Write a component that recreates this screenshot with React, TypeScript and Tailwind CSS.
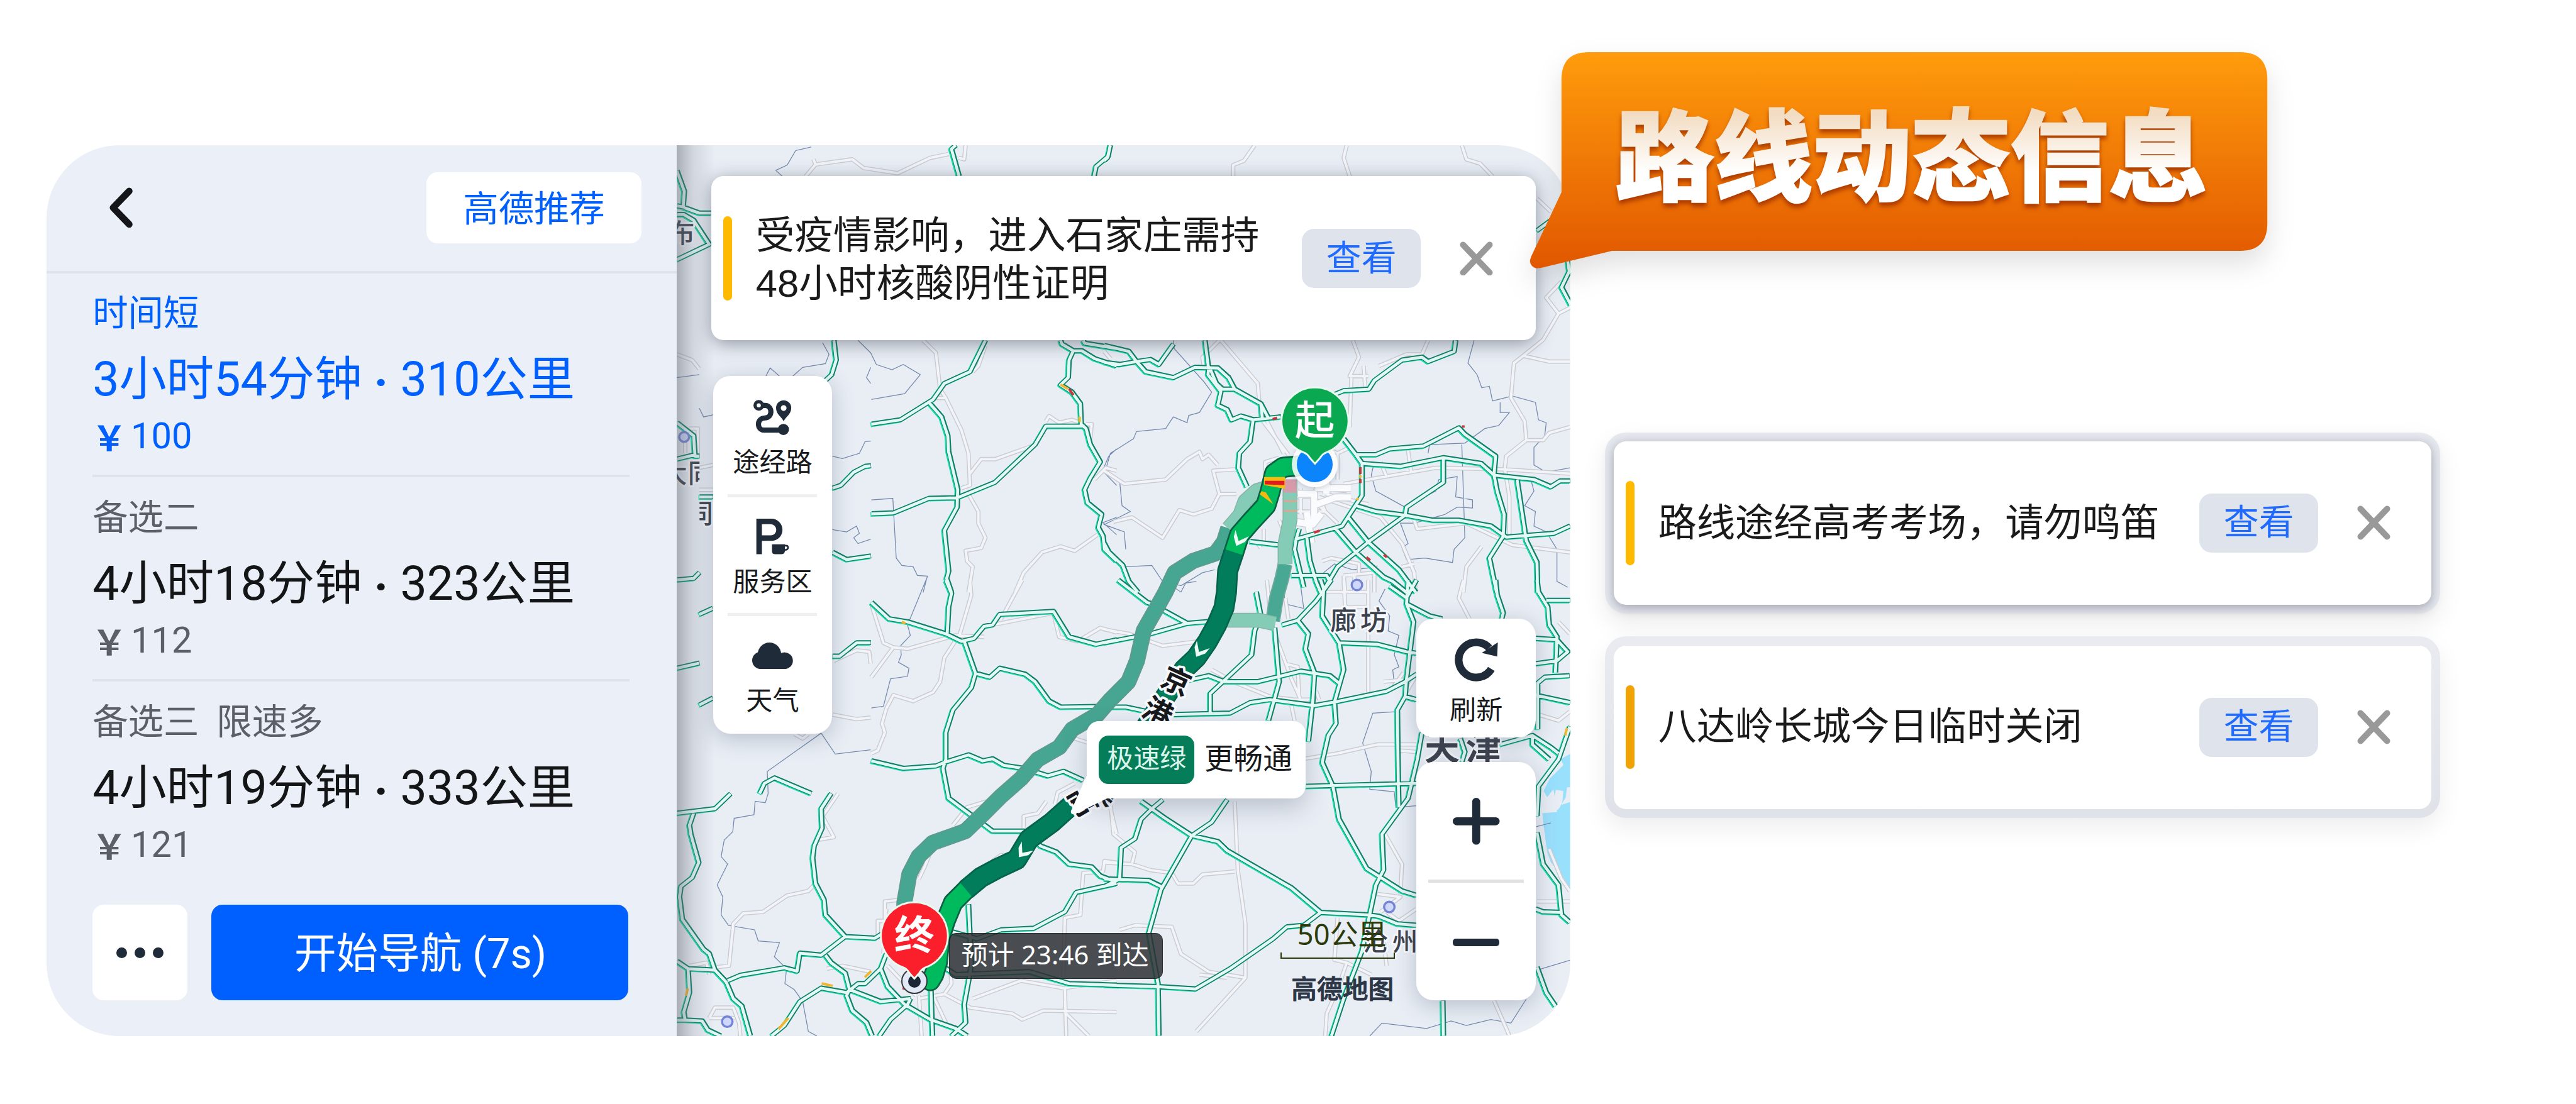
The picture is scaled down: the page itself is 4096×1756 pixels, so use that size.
import React from "react";

/* ---------- map data: four survey sheets, each with its own origin and scale ---------- */

type Sheet = { ox: number; oy: number; sx: number; sy: number; green: string[]; grey: string[]; border: string[] };

const sheets: Sheet[] = [
  {
    ox: 1090, oy: 220, sx: 0.4592, sy: 0.472,
    green: [
      "16,120 42,190 38,245 95,265 137,265", "16,270 40,270 75,290 130,372 16,425", "16,240 45,245",
      "1000,32 985,45 1012,139", "1545,32 1538,70 1495,105 1488,139",
      "570,702 578,770 562,820 540,840", "1105,702 1050,810 960,850 920,905 805,975 702,990",
      "905,915 950,965 972,1030 975,1085 1007,1215 1005,1275 960,1355 975,1495 968,1520 985,1568",
      "702,1298 780,1295 905,1245 1005,1243 1138,1190 1280,1060 1318,997 1455,997",
      "1370,702 1375,715 1415,738 1400,770 1397,830 1370,855 1410,880 1440,920 1443,990 1460,1005 1475,1060 1510,1120 1475,1175 1455,1215 1465,1260 1515,1300 1503,1345 1520,1375 1525,1420 1568,1460",
      "1415,738 1445,738 1490,765 1568,790", "1450,702 1455,712 1568,730",
      "565,1210 595,1200 640,1155 680,1135 700,1133", "565,1430 615,1455 700,1443",
      "16,985 75,1030 80,1100 95,1100", "16,1110 80,1095", "16,1525 75,1520 95,1500", "95,1240 143,1240",
    ],
    grey: [
      "470,139 505,98 635,80 675,110 795,128 910,75 975,62", "505,98 498,80", "1035,32 1030,80 1010,75",
      "885,702 930,745 945,870 965,900 1020,1010 1045,1090 1050,1200 1020,1210",
      "1050,1160 1090,1110 1140,1110 1270,1065", "1318,980 1330,962 1365,985 1410,975 1440,985",
      "1045,1230 1080,1290 1080,1330 1105,1380 1090,1415 1035,1425 1040,1460 1060,1480 1045,1568",
      "1210,1568 1240,1500 1305,1430 1370,1410 1420,1425 1500,1370", "16,750 70,770 95,800",
      "1105,720 1080,790 1060,810", "965,900 930,900", "95,1215 143,1215", "1460,990 1480,990 1475,1040",
      "45,1010 45,1090", "60,1005 90,1005 90,1090", "95,1140 143,1130", "1568,1150 1530,1140 1490,1180",
    ],
    border: [
      "490,38 435,50 405,100 365,118 395,145", "330,825 345,797 378,825", "425,825 460,795 540,782 553,750 530,710",
      "655,702 700,745 720,785 775,803 815,785 875,820 820,885 702,905", "700,795 685,830 700,850", "16,830 95,820",
      "565,1100 600,1108 660,1090 680,1050 700,1048",
      "702,1250 778,1245 790,1450 810,1475 850,1480 865,1510 900,1512 885,1568",
      "565,1352 615,1360 650,1340 660,1365 640,1380 655,1400 700,1385", "1568,1075 1540,1100 1518,1150 1568,1200",
      "1568,1310 1520,1328 1568,1370", "95,935 110,965 143,958",
    ],
  },
  {
    ox: 1790, oy: 220, sx: 0.4974, sy: 0.472,
    green: [
      "20,32 10,75 0,85", "0,720 80,740 105,775 150,768 178,785 225,715",
      "0,778 50,785 105,775 135,810 225,830 295,795 370,797 405,830 425,870 510,920 535,970",
      "328,702 340,800 338,820 380,878 370,925 400,940 415,975 445,962 485,975 575,965",
      "345,800 365,850 385,870 425,870", "510,920 515,970", "485,975 475,1050 440,1090 437,1140 465,1205",
      "1145,702 1140,740 1055,775 1035,760 970,770 880,840 862,870 780,875 750,888",
      "780,1040 820,1095 885,1095 930,1075 1040,1065 1155,1003 1175,1025 1275,1100 1270,1165",
      "820,1095 840,1125 965,1135 1105,1105 1228,1125 1270,1165 1400,1180 1455,1205 1485,1185 1517,1185",
      "840,1125 840,1235 775,1340 625,1385",
      "820,1270 885,1290 980,1303 1070,1320 1155,1320 1260,1340 1310,1378 1465,1365 1517,1340",
      "1105,1105 1105,1190 985,1275 980,1303 860,1395 820,1430 760,1480 710,1568",
      "795,1310 860,1395 960,1490 1015,1568", "755,1350 820,1430 910,1515 940,1530 985,1568",
      "1270,1165 1280,1220 1303,1300 1300,1375 1255,1450 1278,1568", "1345,1180 1375,1390 1410,1465 1412,1568",
      "0,1400 15,1430 60,1475 80,1530 110,1568", "475,1393 570,1405", "625,1385 620,1420 650,1550",
      "660,1380 670,1460 690,1530 705,1568", "610,1510 725,1510 735,1530", "1410,325 1455,290",
      "1510,430 1515,465 1490,520 1520,580", "635,1350 625,1385",
    ],
    grey: [
      "490,32 455,85 420,100 420,139", "790,32 780,75 800,139", "1165,32 1180,80 1225,95 1265,139", "1410,215 1455,260",
      "1517,590 1480,610 1430,700 1365,755 1335,780 1325,900 1370,980 1375,1045 1310,1100 1305,1140",
      "1365,755 1450,775 1517,775", "1480,610 1440,555 1490,500", "1375,1045 1430,1045 1450,1020 1517,1000",
      "380,702 500,850 510,970 600,1095", "375,702 320,760 325,800", "0,740 20,765", "810,702 830,760 800,825 860,825",
      "845,790 850,860", "1055,702 1035,750 985,750 895,790", "805,830 800,1000", "525,970 585,1090",
      "0,1150 65,1195 200,1180 270,1110 310,1085 320,1110 340,1095 370,1130",
      "30,1325 90,1310 190,1380 245,1285 290,1300 350,1280 375,1230 355,1150 430,1145", "375,1230 430,1230",
      "780,1195 1080,1140 1300,1145 1517,1160", "900,1120 920,1170", "990,1080 1000,1155",
      "700,1240 900,1310 970,1400 1010,1500 1015,1568", "690,1260 760,1330", "1305,1140 1320,1240 1320,1370",
      "1010,1320 1020,1350 1180,1330 1280,1380 1330,1405 1517,1430", "570,1105 525,1120 525,1210", "660,1320 665,1380",
      "710,1460 740,1450 830,1470 830,1500", "1230,1410 1180,1480 1170,1568", "780,1510 880,1500 880,1568",
      "580,1240 680,1240 690,1210 790,1220", "620,1290 720,1290 700,1240", "570,1320 580,1345 640,1330", "760,1180 760,1090 700,1060",
      "640,1210 640,1300", "500,1400 510,1415", "970,1480 1010,1470", "780,1510 785,1568", "815,1510 815,1568",
      "520,1390 520,1350", "760,1090 800,1070 780,1050", "720,1230 860,1265",
    ],
    border: [
      "225,702 228,730 325,845 350,880 310,950 275,960 270,985 225,965 200,1005 105,1015 95,1040 20,1090 5,1145 50,1185 58,1270 85,1290 0,1335 65,1360 70,1420",
      "1205,702 1185,780 1215,820 1230,865 1255,860 1265,910 1330,893 1405,915 1415,975 1440,985 1435,1030 1400,1070 1400,1130 1440,1155 1517,1140",
      "1290,915 1290,950 1320,950 1285,995 1240,1005 1175,1055 1060,1060 1055,1090",
      "880,1120 870,1165 885,1220 980,1275 1080,1220 1090,1180 1150,1170 1145,1240 1200,1250 1200,1278 1150,1275 1110,1300 1010,1330 965,1330 990,1400 970,1415 985,1455 1045,1450 1135,1465 1140,1420 1175,1380 1165,1060",
      "1390,1180 1400,1220 1370,1270 1405,1290 1400,1340 1440,1360 1475,1420 1475,1530 1510,1550",
      "60,1480 155,1475 190,1530 250,1545 320,1500 360,1490", "715,1500 750,1470 810,1490 890,1480",
    ],
  },
  {
    ox: 1090, oy: 940, sx: 0.4592, sy: 0.4847,
    green: [
      "702,75 765,130 830,140 965,180 1020,205 1065,195 1100,155 1130,150 1155,115 1345,105 1400,190 1495,215 1568,200",
      "965,0 985,45 975,90 970,180",
      "1030,205 1070,312 1055,360 990,435 965,510 965,600 955,630 975,730 1130,840 1240,840 1300,890 1355,910 1400,950 1480,960 1510,990 1568,1010",
      "1070,312 1120,325 1155,295 1245,315 1280,340 1330,405 1370,425 1505,423",
      "702,605 815,630 930,622 960,610 1045,585 1095,605 1130,598 1170,620 1240,630 1325,655 1380,640 1450,670",
      "95,115 142,95", "95,418 142,395", "16,295 95,278", "565,255 590,255 650,210 700,210", "16,780 150,765 205,715",
      "75,780 60,820 65,850 93,945 70,995 30,1025 25,1060 35,1135 110,1235 130,1250 150,1305 190,1345 215,1400 245,1425 275,1525",
      "308,714 325,680 360,662 490,714",
      "560,714 525,765 528,830 500,890 495,930 505,1015 535,1070 540,1120 610,1193 715,1198 745,1180", "16,1275 55,1300 150,1305",
      "195,1340 240,1322 395,1297 440,1308 450,1248 525,1255 610,1193", "55,1300 60,1380 40,1445 45,1472 16,1472",
      "45,1472 105,1475 125,1505 170,1525",
      "350,1525 395,1490 450,1410 525,1365 615,1380 655,1350 680,1350 735,1300 755,1250",
      "540,1255 560,1280 610,1315 625,1370 615,1390 635,1440 685,1480 705,1525", "625,1370 735,1410 840,1400",
      "735,1300 760,1360 820,1420 910,1470 1000,1500 1040,1525", "730,1525 770,1470 830,1420 840,1400", "912,1360 918,1525",
      "1045,1085 1055,1290 1030,1420 1035,1480 985,1525",
      "1568,1015 1425,1045 1385,1110 1275,1165 1160,1170 1075,1200 980,1175", "950,1290 1000,1320 1260,1310 1400,1350 1568,1355",
    ],
    grey: [
      "702,80 745,210 780,225 830,230 1000,185 1100,190", "702,325 780,225",
      "1050,0 1055,50 1015,180 960,260 945,340 920,375 850,405 780,385 755,430 740,480 750,510 725,570 702,580",
      "1235,0 1160,130", "1130,150 1345,110 1365,190 1430,205 1510,160 1568,175", "585,714 530,790 570,860 505,870",
      "505,1015 480,1040 405,1055 320,1110 250,1115 215,1150 200,1290 110,1300", "565,450 650,465 700,460",
      "570,270 650,235 695,240 700,280", "755,1100 745,1250", "750,1150 750,1075 800,1070", "725,1200 725,1140 755,1140",
      "870,1400 960,1385 1050,1430 1200,1450 1235,1470 1310,1440 1568,1445", "870,1390 880,1525", "920,1390 975,1500",
      "1385,1360 1390,1525", "1380,1330 1385,1130 1440,1120 1450,980 1520,975 1525,940 1568,945", "1240,830 1240,790 1290,780 1320,740",
      "990,820 1040,760 1110,740", "870,1000 890,960 915,900", "130,1465 150,1430 215,1430 235,1480 240,1525",
      "60,1290 120,1280 130,1320", "545,1300 600,1290 700,1310", "1350,750 1360,710 1420,680", "1390,1450 1470,1525",
      "980,1290 985,1350 960,1385", "760,1290 860,1390", "130,1465 220,1465", "1130,940 1160,920 1200,920", "1060,1400 1230,1340 1380,1365 1568,1340",
      "1540,740 1568,850", "430,515 460,530 480,515", "1420,530 1470,545",
    ],
    border: [
      "895,0 830,150 840,185 805,220 808,250 798,275 835,295 830,322 770,330 745,422 702,428", "525,512 575,582 700,568",
      "525,512 335,640 338,714 328,745 292,740 288,785 218,797 213,842 183,870 172,925 195,950 158,1020 178,1060 172,1120 198,1155 290,1170 303,1207 378,1213 360,1260 403,1300 397,1350 430,1370 460,1410 480,1510 510,1525",
    ],
  },
  {
    ox: 1790, oy: 940, sx: 0.4974, sy: 0.4847,
    green: [
      "45,0 140,75 155,80 270,145 385,135", "0,210 150,180 270,145", "495,40 510,120 490,170 480,250 345,380 345,450",
      "275,335 340,320 390,340 500,340 640,305 735,320 765,345",
      "0,425 70,425 140,440 230,450 410,445 475,410 540,400 685,420 750,408 920,372 980,340 1017,315",
      "555,160 570,340 535,470", "580,150 630,135 690,70 740,0", "630,135 665,180 655,230 685,310 680,400 665,540",
      "705,0 715,30 710,120 765,210 780,300 750,408 755,480 730,520 710,610 745,690 765,800 855,965 970,1040 1017,1055",
      "765,210 890,215 985,240 1017,245", "990,0 985,80 1008,140 985,330 980,390 955,435 958,680 960,760",
      "985,80 1060,120 1100,130", "930,20 985,60 1017,0", "1275,0 1280,50 1300,110 1295,130",
      "1410,0 1415,40 1445,90 1450,150 1475,190 1470,310", "1440,68 1517,68", "1405,195 1475,200 1510,240 1475,270 1405,280",
      "1515,320 1435,325 1412,345 1412,500", "657,690 1017,680", "1035,510 1020,600 990,730 905,850 910,970 885,1020 840,1240 780,1400 740,1525",
      "120,740 195,795 285,855 370,875 400,905 610,1030 705,1112 860,1120 895,1125 955,1150 1017,1155",
      "400,735 350,810 285,855 185,1035 145,1180 175,1350 178,1525", "190,735 155,765 120,800 100,865 55,895 50,1000 0,1025",
      "0,1000 145,1005 185,1025", "0,1355 175,1360 297,1368 410,1300 550,1200 595,1160 650,1155 705,1112",
      "1290,550 1395,520 1455,560 1480,580", "1517,490 1480,600 1415,690 1410,790", "1410,845 1430,950 1480,1020 1490,1120 1517,1145",
      "1405,1100 1430,1110 1490,1112", "1410,1295 1440,1380 1470,1425", "1103,1407 1105,1525", "1160,530 1175,575 1165,608",
      "980,390 1017,400", "1405,385 1517,410", "1395,520 1395,550 1450,600",
    ],
    grey: [
      "530,0 545,150 610,330 640,400", "0,165 80,180 190,220 350,200", "350,300 420,340 540,390 620,400 690,400",
      "425,740 435,970 460,1150 460,1330 300,1510", "90,950 100,910 30,850 20,740",
      "0,945 90,950 150,970 220,980 240,1015 290,1015 320,985 425,975", "640,600 760,580 890,550 1017,550",
      "915,850 970,950 965,1050", "890,1050 965,1060 900,1110", "760,1130 750,1270 790,1280 850,1310 870,1320",
      "790,1280 760,1370 725,1450 720,1525", "50,1170 100,1155 220,1160 250,1250 340,1310 460,1330", "1170,0 1155,60 1190,130",
      "720,40 860,40", "780,0 785,90 860,90", "860,0 860,380", "910,340 1010,330 970,400", "1410,1075 1517,1075",
      "1450,900 1490,1000 1517,1040", "1270,1407 1310,1500 1320,1525", "1415,450 1480,470 1517,440", "920,1110 960,1140 1017,1100",
      "400,1330 310,1320", "590,280 630,290 635,390", "690,370 700,400", "910,1200 920,1290", "1480,140 1517,180",
      "600,130 590,60", "610,420 620,470", "940,360 975,310", "960,570 1017,575",
    ],
    border: [
      "915,30 895,70 930,120 925,170 960,185 945,250 960,290 940,300 945,350 970,355",
      "955,440 875,445 842,545 870,640 865,700 945,708 950,760 1017,755",
      "865,1525 905,1482 1050,1500 1130,1475 1180,1490 1260,1470 1325,1482 1375,1402", "1408,825 1455,812",
      "1410,1305 1517,1272", "190,0 250,40 265,10 300,5", "580,0 590,80 650,95 640,20",
    ],
  },
];

function toPath(s: Sheet, lines: string[]) {
  return lines
    .map((line) =>
      line
        .split(" ")
        .map((p, i) => {
          const [x, y] = p.split(",").map(Number);
          return `${i ? "L" : "M"}${(s.ox + x * s.sx).toFixed(1)} ${(s.oy + y * s.sy).toFixed(1)}`;
        })
        .join("")
    )
    .join("");
}

const greenRoads = sheets.map((s) => toPath(s, s.green)).join("");
const greyRoads = sheets.map((s) => toPath(s, s.grey)).join("");
const borders = sheets.map((s) => toPath(s, s.border)).join("");

const cityBlocks =
  "M2104 800H2130V846M2132 791H2190M2150 780V800M2132 818L2165 806H2190M2102 846L2128 850L2142 832M2118 830L2126 880";

const routeStart = "M2104 755L2080 757L2066 767L2059 796L2052 819L2028 845L2009 867L2000 895";
const routeMiddle =
  "M2000 895L1990 925L1988 960L1984 985L1972 1013L1957 1040L1939 1066L1919 1085L1889 1129L1850 1190L1800 1270L1779 1285L1733 1308L1705 1333L1668 1360L1648 1393L1618 1407L1590 1422L1566 1442";
const routeEnd = "M1566 1442L1545 1463L1533 1492L1524 1520L1520 1560L1514 1580L1508 1590";
const altLeftLight = "M2060 788L2037 795L2018 812L2010 834L1991 856";
const altLeft =
  "M1991 856L1984 878L1970 897L1934 909L1904 928L1889 960L1875 985L1854 1022L1843 1071L1829 1105L1800 1134L1779 1158L1738 1182L1717 1211L1682 1231L1655 1262L1622 1291L1595 1318L1565 1347L1512 1366L1489 1388L1474 1417L1466 1463L1466 1490";
const altRightLight = "M2091 777L2091 843L2083 881L2083 914";
const altRight = "M2083 914L2078 937L2069 969L2063 1006";
const altJoin = "M2067 1011L2040 1005L1984 1005";

const labelFont = "'Noto Sans','Noto Sans CJK SC',sans-serif";

function MapLabel({ x, y, size, children, bold, spacing = 0 }: any) {
  return (
    <text
      x={x}
      y={y}
      fontSize={size}
      fontFamily={labelFont}
      fontWeight={bold ? 700 : 500}
      fill="#3c424d"
      stroke="#f6f8fb"
      strokeWidth={6}
      strokeLinejoin="round"
      paintOrder="stroke"
      letterSpacing={spacing}
    >
      {children}
    </text>
  );
}

/* One character of a highway name, centred on the given point and turned with the road. */
function RoadGlyph({ x, y, rotate, children }: any) {
  return (
    <text
      transform={`translate(${x} ${y}) rotate(${rotate})`}
      y={17}
      textAnchor="middle"
      fontSize={47}
      fontFamily={labelFont}
      fontWeight={700}
      fill="#16181b"
      stroke="#f6f8fb"
      strokeWidth={8}
      strokeLinejoin="round"
      paintOrder="stroke"
    >
      {children}
    </text>
  );
}

function Arrow({ x, y, r }: { x: number; y: number; r: number }) {
  return (
    <path
      d="M-12 -11L0 3L12 -11L10 0L0 12L-10 0Z"
      transform={`translate(${x} ${y}) rotate(${r})`}
      fill="#effbf5"
    />
  );
}

function MapCanvas() {
  return (
    <svg className="absolute inset-0 size-full" viewBox="1097 235 1448 1445" preserveAspectRatio="none">
      <defs>
        <linearGradient id="edge" x1="0" x2="1" y1="0" y2="0">
          <stop offset="0" stopColor="#5b606b" stopOpacity=".46" />
          <stop offset=".45" stopColor="#6b7080" stopOpacity=".18" />
          <stop offset="1" stopColor="#6b7080" stopOpacity="0" />
        </linearGradient>
        <clipPath id="tongA"><rect x="1097" y="700" width="37" height="100" /></clipPath>
        <clipPath id="tongB"><rect x="1134" y="790" width="40" height="80" /></clipPath>
      </defs>
      <rect x="1097" y="235" width="1448" height="1445" fill="#e9eef5" />
      <path d="M2545 1222L2530 1230L2534 1240L2512 1262L2502 1282L2508 1292L2518 1279L2524 1316L2500 1318L2503 1345L2508 1382L2514 1398L2530 1416L2545 1440Z" fill="#99e0fd" />
      <path d="M2522 1280L2534 1282L2532 1304L2545 1300L2545 1276L2540 1276L2538 1292L2526 1312L2514 1314Z" fill="#e9eef5" />
      <path d={borders} fill="none" stroke="#7489ad" strokeWidth="1.3" />
      <g fill="none" strokeLinejoin="round">
        <path d={greyRoads} stroke="#c9ccd3" strokeWidth="7" />
        <path d={greyRoads} stroke="#f2f4f8" strokeWidth="4" />
      </g>
      <g fill="none" strokeLinejoin="round">
        <path d={cityBlocks} stroke="#cfd3da" strokeWidth="13" />
        <path d={cityBlocks} stroke="#fafbfd" strokeWidth="10" />
      </g>
      <g fill="none" strokeLinejoin="round">
        <path d={greenRoads} stroke="#15dba8" strokeWidth="8" transform="translate(-1.2 .8)" />
        <path d={greenRoads} stroke="#0e7f68" strokeWidth="8" transform="translate(.6 -.4)" />
        <path d={greenRoads} stroke="#e3f9f4" strokeWidth="4.8" />
      </g>
      <g fill="none" strokeWidth="4">
        <path d="M1733 630L1740 640M2063 679L2070 677M2205 757V768M2205 776V783M2130 863L2139 860M2215 903L2221 908M2243 899L2248 903M1463 1602H1470M2370 691H2374" stroke="#c9333b" />
        <path d="M1719 623L1731 630M1750 675V684M2205 770V774M2199 810L2202 807M1462 1008L1468 1010M1115 1602L1112 1614M1332 1594L1350 1598M1262 1668L1278 1650M1402 1584L1412 1574M2540 1180L2537 1192" stroke="#f2b530" />
      </g>

      <g stroke="#7484d8" strokeWidth="3.5" fill="#cfd8fb">
        <circle cx="1109" cy="708" r="8" />
        <circle cx="1179" cy="1656" r="8.5" />
        <circle cx="2199.5" cy="948" r="8.5" />
        <circle cx="2252" cy="1470" r="8.5" />
      </g>
      <MapLabel x={1083} y={393} size={43}>布</MapLabel>
      <g clipPath="url(#tongA)"><MapLabel x={1071} y={782} size={43} spacing={1}>大同</MapLabel></g>
      <g clipPath="url(#tongB)"><MapLabel x={1113} y={848} size={43}>同</MapLabel></g>
      <MapLabel x={2156} y={1021} size={43} spacing={6}>廊坊</MapLabel>
      <MapLabel x={2309} y={1232} size={57} spacing={10} bold>天津</MapLabel>
      <MapLabel x={2209} y={1541} size={41} spacing={7}>沧州</MapLabel>

      <g fill="none" strokeLinejoin="round">
        <path d={altLeft} stroke="#5f9a8d" strokeWidth="26" />
        <path d={altLeft} stroke="#46a692" strokeWidth="22" />
        <path d={altRight} stroke="#6fa99c" strokeWidth="24" />
        <path d={altRight} stroke="#48a893" strokeWidth="20" />
        <path d={altLeftLight + altRightLight + altJoin} stroke="#86b5a6" strokeWidth="24" />
        <path d={altLeftLight + altRightLight + altJoin} stroke="#84ccb5" strokeWidth="21" />
        <path d="M2091 777V798" stroke="#d69aaa" strokeWidth="21" />
        <path d="M2081 812H2102M2081 828H2102" stroke="#dda58f" strokeWidth="3" />
        <g strokeLinecap="round">
          <path d={routeStart} stroke="#0a6043" strokeWidth="34" />
          <path d={routeEnd} stroke="#0a6043" strokeWidth="33" />
        </g>
        <path d={routeMiddle} stroke="#046348" strokeWidth="34" />
        <path d={routeStart} stroke="#00ba5e" strokeWidth="28.5" />
        <path d={routeEnd} stroke="#00ba5e" strokeWidth="27.5" strokeLinecap="round" />
        <path d={routeMiddle} stroke="#027d5c" strokeWidth="28.5" />
      </g>
      <path d="M2049 773H2083V792L2049 786Z" fill="#f8bb0c" />
      <path d="M2050 779H2082V786L2050 785Z" fill="#e01b25" />
      <path d="M2045 796L2052 798L2064 817L2042 801Z" fill="#f4b90f" />
      <Arrow x={2009} y={874} r={25} />
      <Arrow x={1945} y={1054} r={30} />
      <Arrow x={1659} y={1380} r={38} />

      <RoadGlyph x={1907} y={1104} rotate={24}>京</RoadGlyph>
      <RoadGlyph x={1877} y={1154} rotate={27}>港</RoadGlyph>
      <RoadGlyph x={1790} y={1280} rotate={38}>澳</RoadGlyph>
      <RoadGlyph x={1756} y={1298} rotate={60}>高</RoadGlyph>

      <rect x="1097" y="235" width="62" height="1445" fill="url(#edge)" />
    </svg>
  );
}

/* ---------- pieces of the interface ---------- */

function CloseIcon() {
  return (
    <svg className="h-[56px] w-[54px] shrink-0" viewBox="0 0 54 56">
      <path d="M5.5 5.5L48.5 50.5M48.5 5.5L5.5 50.5" stroke="#999" strokeWidth="10" strokeLinecap="round" />
    </svg>
  );
}

function Notice({ lines, bar, className }: { lines: string[]; bar: string; className: string }) {
  return (
    <div className={`flex items-center rounded-[20px] bg-white pl-[19px] ${className}`}>
      <div className={`h-[136px] w-[15px] shrink-0 rounded-[7px] ${bar}`} />
      <div className="ml-[38px] grow font-[family-name:'Liberation_Sans','Noto_Sans_CJK_SC',sans-serif] leading-[78px] whitespace-nowrap text-[#1a1a1a]">
        {lines.map((l) => (
          <div key={l}>{l}</div>
        ))}
      </div>
      <button className="mr-[63px] flex h-[96px] w-[193px] shrink-0 items-center justify-center rounded-[20px] bg-[#dfe3ec] pt-[1px] text-[57px] leading-none text-[#1f6bff]">
        查看
      </button>
      <CloseIcon />
    </div>
  );
}

function RouteRow({ tag, time, distance, price, active, last }: any) {
  return (
    <div
      className={`flex h-[331px] flex-col border-b-[5px] pt-[26px] whitespace-nowrap ${last ? "border-transparent" : "border-[#dfe3ed]"} ${active ? "text-[#0060ff]" : "text-[#5c5f66]"}`}
    >
      <div className="text-[57.500px] leading-[80px] whitespace-pre">{tag}</div>
      <div className={`mt-[16px] text-[76.800px] leading-[100px] ${active ? "" : "text-[#141517]"}`}>
        {time}
        <span className="relative top-[5px] mx-[19.500px] font-bold">·</span>
        {distance}
      </div>
      <div className="mt-[2px] flex items-center text-[59px] leading-[80px]">
        <span className="mr-[7px] ml-[-1px] font-[family-name:'Noto_Sans_CJK_SC',sans-serif] text-[56px] font-bold">￥</span>
        {price}
      </div>
    </div>
  );
}

function Tool({ label, low, children }: any) {
  return (
    <button className="flex h-[193px] w-full flex-col items-center pt-[35px] text-[43px] leading-[50px] text-[#17191c]">
      <span className="flex h-[64px] items-center justify-center">{children}</span>
      <span className={low ? "mt-[24px]" : "mt-[16px]"}>{label}</span>
    </button>
  );
}

function Panel() {
  return (
    <aside className="flex w-[1022px] shrink-0 flex-col bg-[#ebeff8]">
      <header className="flex h-[208px] items-center justify-between border-b-[5px] border-[#dfe3ed] pr-[57px] pl-[100px]">
        <svg className="h-[66px] w-[42px]" viewBox="0 0 42 66">
          <path d="M34 6L8 33L34 60" fill="none" stroke="#141619" strokeWidth="11" strokeLinecap="round" strokeLinejoin="round" />
        </svg>
        <button className="flex h-[116px] w-[349px] items-center justify-center rounded-[18px] bg-white pt-[5px] text-[57.500px] leading-none text-[#0060ff]">
          高德推荐
        </button>
      </header>
      <div className="pr-[77px] pl-[75px]">
        <RouteRow active tag="时间短" time="3小时54分钟" distance="310公里" price="100" />
        <RouteRow tag="备选二" time="4小时18分钟" distance="323公里" price="112" />
        <RouteRow last tag="备选三  限速多" time="4小时19分钟" distance="333公里" price="121" />
      </div>
      <div className="mt-[31px] flex gap-[39px] pl-[75px]">
        <button className="flex h-[155px] w-[154px] items-center justify-center gap-[12px] rounded-[18px] bg-white">
          <i className="size-[17.500px] rounded-full bg-[#1f2b38]" />
          <i className="size-[17.500px] rounded-full bg-[#1f2b38]" />
          <i className="size-[17.500px] rounded-full bg-[#1f2b38]" />
        </button>
        <button className="flex h-[155px] w-[675px] items-center justify-center rounded-[18px] bg-[#0060ff] pt-[4px] pl-[2px] text-[68px] leading-none whitespace-pre text-white">
          开始导航 (7s)
        </button>
      </div>
    </aside>
  );
}

function Pin({ className, color, children }: any) {
  return (
    <div className={`absolute h-[130px] w-[116px] ${className}`}>
      <svg className="absolute inset-0 size-full" viewBox="0 0 116 130">
        <path d="M58 3A54.500 54.500 0 0 1 77 108.500Q70 111 66 118L58 127L50 118Q46 111 39 108.500A54.500 54.500 0 0 1 58 3Z" fill={color} stroke="#eafaf0" strokeWidth="3" />
      </svg>
      <div className="relative pt-[23px] text-center text-[65px] leading-[70px] font-medium text-white">{children}</div>
    </div>
  );
}

const card = "absolute bg-white rounded-[28px] shadow-[0_8px_36px_rgba(70,80,105,0.3)]";

function MapView() {
  return (
    <section className="relative w-[1448px] overflow-hidden">
      <MapCanvas />

      <Notice
        lines={["受疫情影响，进入石家庄需持", "48小时核酸阴性证明"]}
        bar="bg-[#ffba00]"
        className="absolute top-[50.500px] left-[56px] h-[266px] w-[1336px] pt-[1px] pr-[69px] text-[62.800px] shadow-[0_6px_28px_rgba(60,65,85,0.5)] [&>div:nth-child(2)]:pt-[5px]"
      />

      <div className={`${card} top-[375px] left-[58.500px] h-[580px] w-[193.500px]`}>
        <Tool label="途经路">
          <svg className="h-[57px] w-[62px]" viewBox="64 54 186 171" fill="#1f2b38">
            <path d="M100 81H120C157 81 160 140 120 142C76 144 82 201 114 201H205" fill="none" stroke="#1f2b38" strokeWidth="25" />
            <circle cx="90" cy="81" r="18" fill="#fff" stroke="#1f2b38" strokeWidth="16" />
            <circle cx="210" cy="198" r="27" />
            <path fillRule="evenodd" d="M211 158C202 138 174 124 174 93A37 37 0 0 1 248 93C248 124 220 138 211 158ZM211 80A14 14 0 1 0 211 108A14 14 0 1 0 211 80Z" />
          </svg>
        </Tool>
        <div className="absolute top-[191px] left-[24px] h-[5px] w-[145px] bg-[#efefef]" />
        <Tool label="服务区">
          <svg className="h-[58px] w-[54px]" viewBox="79 50 160 174" fill="#1f2b38">
            <path fillRule="evenodd" d="M80 50H153A54 54 0 0 1 153 158H107V223H80ZM107 77V131H150A27 27 0 0 0 150 77Z" />
            <path d="M156 175H219V205Q219 223 200 223H172Q156 223 156 208Z" />
            <path d="M217 181H224Q234 181 234 190Q234 202 217 202" fill="none" stroke="#1f2b38" strokeWidth="8" />
          </svg>
        </Tool>
        <div className="absolute top-[384px] left-[24px] h-[5px] w-[145px] bg-[#efefef]" />
        <Tool label="天气">
          <svg className="h-[44px] w-[66px]" viewBox="0 0 66 44" fill="#1f2b38">
            <circle cx="28" cy="20" r="19" />
            <circle cx="14" cy="30" r="14" />
            <circle cx="52.500" cy="30.500" r="13.500" />
            <path d="M14 20H45Q47 17 53 17V44H14Z" />
          </svg>
        </Tool>
      </div>

      <div className={`${card} top-[768px] left-[1199px] h-[193px] w-[193px]`}>
        <Tool label="刷新" low>
          <svg className="h-[76px] w-[76px]" viewBox="-38 -38 76 76" fill="none">
            <path d="M21 -19A28.500 28.500 0 1 0 24.500 15" stroke="#1f2b38" strokeWidth="12.500" />
            <path d="M35 -28L34 -5L9 -11Z" fill="#1f2b38" />
          </svg>
        </Tool>
      </div>

      <div className={`${card} top-[1000px] left-[1199px] flex h-[387px] w-[193px] flex-col items-center`}>
        <div className="flex h-[191px] items-center pt-[2px]">
          <svg className="size-[78px]" viewBox="0 0 78 78">
            <path d="M39 7.500V70.500M7.500 39H70.500" stroke="#1f2b38" strokeWidth="13" strokeLinecap="round" />
          </svg>
        </div>
        <div className="h-[5px] w-[155px] bg-[#e1e1e3]" />
        <div className="flex grow items-center pt-[3px]">
          <div className="h-[13px] w-[76px] rounded-[5px] bg-[#1f2b38]" />
        </div>
      </div>

      <div className="absolute top-[934px] left-[664px] flex h-[126px] w-[355px] items-center rounded-[20px] bg-white pl-[20px] shadow-[0_14px_40px_rgba(60,70,95,0.28)]">
        <svg className="absolute top-[80px] -left-[27px] h-[74px] w-[70px]" viewBox="0 0 70 74">
          <path d="M28 8L2 66Q1 73 9 71L62 45V8Z" fill="#fff" />
        </svg>
        <span className="relative flex h-[79px] w-[155px] items-center justify-center rounded-[16px] bg-[#047d58] pb-[3px] text-[43px] leading-none text-[#dcf5ec]">
          极速绿
        </span>
        <span className="relative ml-[16px] pb-[3px] text-[47.500px] leading-none text-[#17191c]">更畅通</span>
      </div>

      <div className="absolute top-[1278px] left-[441px] flex h-[74px] w-[347px] items-center justify-center rounded-[12px] border-2 border-black/40 bg-[#2d2f33]/85 pr-[3px] pb-[5px] font-[family-name:'Noto_Sans','Noto_Sans_CJK_SC',sans-serif] text-[43px] leading-none whitespace-nowrap text-white">
        预计 23:46 到达
      </div>

      <div className="absolute top-[481px] left-[997px] size-[74px] rounded-full bg-white/85 p-[8px] shadow-[0_2px_10px_rgba(60,70,95,0.25)]">
        <div className="size-full rounded-full bg-[#0c84fb]" />
      </div>
      <Pin className="top-[390px] left-[976px]" color="#0aa850">起</Pin>

      <div className="absolute top-[1335px] left-[364px] flex size-[42px] items-center justify-center rounded-full border-[3px] border-[#34373c] bg-[#e2e8f5]">
        <div className="size-[20px] rounded-full bg-[#1b2535]" />
      </div>
      <Pin className="top-[1225px] left-[327px]" color="#fb1f2b">
        <span className="font-bold">终</span>
      </Pin>

      <div className="absolute top-[1251px] left-[978px] flex w-[186px] flex-col items-center">
        <div className="ml-[14px] font-[family-name:'Noto_Sans','Noto_Sans_CJK_SC',sans-serif] text-[46px] leading-[58px] whitespace-nowrap text-[#2c3a0a]">50公里</div>
        <div className="h-[10px] w-full border-[2.500px] border-t-0 border-[#2c3a0a]" />
        <div className="mt-[23px] ml-[16px] text-[41.500px] leading-[56px] font-medium text-[#2c3646] [-webkit-text-stroke:1px_#2c3646]">高德地图</div>
      </div>
    </section>
  );
}

function Banner() {
  return (
    <div className="relative h-[322px] w-[1144px]">
      <svg className="absolute top-0 -left-[60px] h-[360px] w-[1210px] overflow-visible [filter:drop-shadow(0_22px_22px_rgba(0,0,0,0.12))]" viewBox="-60 0 1210 360">
        <defs>
          <linearGradient id="orange" x1="0" x2="0" y1="0" y2="1">
            <stop offset="0" stopColor="#ff9c0c" />
            <stop offset="1" stopColor="#e15700" />
          </linearGradient>
        </defs>
        <path
          d="M44 0H1100Q1144 0 1144 44V278Q1144 322 1100 322H82L-34 350Q-44 352 -49 345Q-53 340 -49 331L0 227V44Q0 0 44 0Z"
          fill="url(#orange)"
        />
      </svg>
      <h1 className="absolute top-[38px] left-[84px] bg-linear-to-b from-[#f2dcc2] from-25% to-white to-65% bg-clip-text pl-[3px] font-[family-name:'Noto_Sans_CJK_SC',sans-serif] text-[160px] leading-[240px] font-black whitespace-nowrap text-transparent [-webkit-text-stroke:2.5px_transparent] [filter:drop-shadow(0_7px_4px_rgba(150,40,0,0.75))]">
        路线动态信息
      </h1>
    </div>
  );
}

export default function App() {
  return (
    <div className="h-screen w-screen overflow-hidden bg-white">
      <main className="flex h-[1790px] w-[4175px] items-start overflow-hidden bg-white pl-[75px] font-[family-name:Roboto,'Noto_Sans_CJK_SC',sans-serif] [zoom:0.98105]">
        <div className="mt-[235px] flex h-[1445px] w-[2470px] shrink-0 overflow-hidden rounded-[118px]">
          <Panel />
          <MapView />
        </div>
        <div className="relative z-10 -ml-[14px] flex flex-col pt-[85px]">
          <Banner />
          <div className="mt-[294px] ml-[70px] flex flex-col gap-[37px]">
            <div className="rounded-[34px] bg-[#e7e9f0] p-[14.500px] shadow-[0_16px_40px_rgba(0,0,0,0.08)]">
              <Notice
                lines={["路线途经高考考场，请勿鸣笛"]}
                bar="bg-[#ffba00]"
                className="h-[265px] w-[1325px] pr-[66px] text-[62.500px] shadow-[0_5px_18px_rgba(60,62,78,0.42)]"
              />
            </div>
            <div className="rounded-[34px] bg-linear-to-b from-[#eaebf1] to-[#dfe2e8] p-[14.500px] shadow-[0_16px_40px_rgba(0,0,0,0.07)]">
              <Notice lines={["八达岭长城今日临时关闭"]} bar="bg-[#f0a303]" className="h-[265px] w-[1325px] pr-[66px] text-[62.500px]" />
            </div>
          </div>
        </div>
      </main>
    </div>
  );
}
